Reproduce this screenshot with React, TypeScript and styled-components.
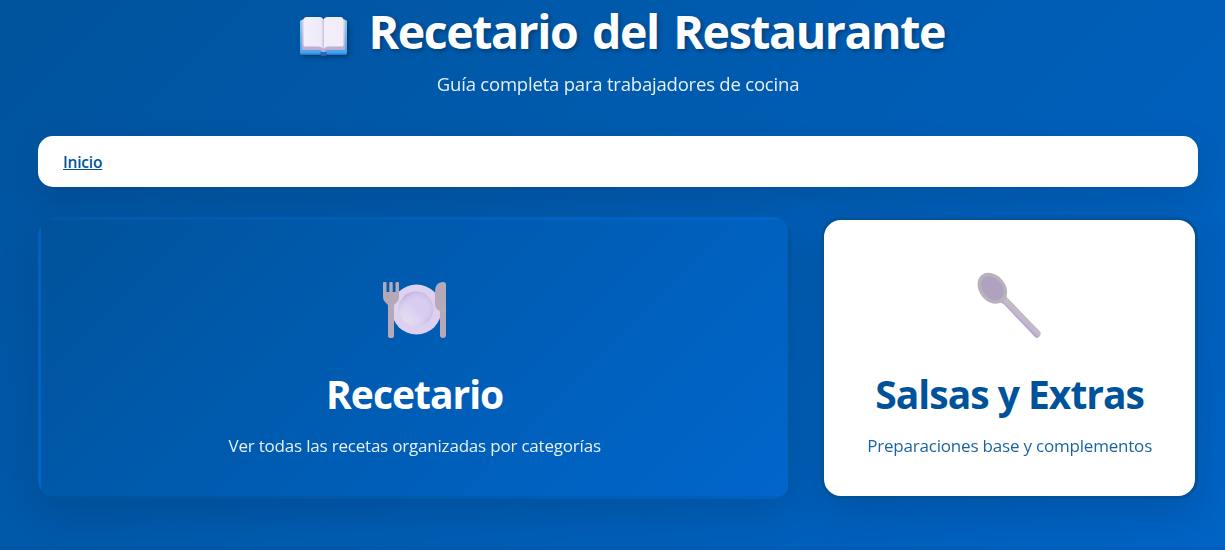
import React from "react";
import styled, { createGlobalStyle } from "styled-components";

const GlobalStyle = createGlobalStyle`
  * { box-sizing: border-box; margin: 0; padding: 0; }
  body {
    font-family: "Open Sans", "Noto Sans", sans-serif;
    background: #0059ad;
    overflow: hidden;
  }
`;

const Page = styled.div`
  height: 550px;
  padding: 0 27px 0 38px;
  background: linear-gradient(135deg, #00539b 0%, #0066cc 100%) 0 -80px / 100% 920px no-repeat;
  border-bottom: 3px solid rgba(0, 40, 90, 0.08);
`;

const Header = styled.header`
  height: 136px;
  display: flex;
  flex-direction: column;
  align-items: center;
  color: #fff;
`;

const Title = styled.h1`
  display: flex;
  height: 62px;
  align-items: center;
  gap: 19px;
  font-size: 46.5px;
  line-height: 62px;
  font-weight: 700;
  white-space: nowrap;
  padding-left: 7px;
`;

const TitleText = styled.span`
  width: 577px;
  letter-spacing: -1.45px;
  word-spacing: 4px;
  text-shadow: 2px 2px 4px rgba(0, 0, 0, 0.3);
`;

const BookIcon = styled.svg`
  width: 52px;
  height: 52px;
  margin-top: 12px;
  filter: drop-shadow(2px 2px 2px rgba(0, 0, 0, 0.3));
`;

const Subtitle = styled.p`
  margin-top: 9px;
  font-size: 18.5px;
  line-height: 26px;
  letter-spacing: -0.2px;
  white-space: nowrap;
  opacity: 0.9;
`;

const Nav = styled.nav`
  height: 51px;
  padding: 2px 25px 0;
  display: flex;
  align-items: center;
  border-radius: 15px;
  background: #fff;
  box-shadow: 0 10px 30px rgba(0, 0, 0, 0.12);
`;

const NavLink = styled.a`
  color: #00539b;
  font-size: 15.5px;
  font-weight: 600;
  line-height: 21px;
  letter-spacing: -0.2px;
  text-decoration: underline;
  text-decoration-thickness: 1px;
`;

const Cards = styled.main`
  display: grid;
  grid-template-columns: 2fr 1fr;
  gap: 30px;
  margin-top: 30px;
`;

const Card = styled.section<{ $primary?: boolean }>`
  height: 282px;
  min-width: 0;
  padding: 48px 0 0;
  display: flex;
  flex-direction: column;
  align-items: center;
  white-space: nowrap;
  border: 3px solid ${(p) => (p.$primary ? "transparent" : "#00539b")};
  border-radius: 20px;
  color: ${(p) => (p.$primary ? "#fff" : "#00539b")};
  background: ${(p) => (p.$primary ? "linear-gradient(135deg, #00539b 0%, #0066cc 100%)" : "#fff")};
  box-shadow: 0 15px 40px rgba(0, 0, 0, 0.13);
`;

const CardIcon = styled.svg`
  width: 72px;
  height: 80px;
`;

const CardTitle = styled.h2`
  margin-top: 19px;
  font-size: 39px;
  line-height: 54px;
  font-weight: 700;
  letter-spacing: -1px;
`;

const CardText = styled.p`
  margin-top: 12px;
  font-size: 17px;
  line-height: 26px;
  letter-spacing: -0.2px;
  opacity: 0.9;
`;

const Book = () => (
  <BookIcon viewBox="0 0 52 52" aria-hidden="true">
    <defs>
      <linearGradient id="cover" x1="0" y1="0" x2="0" y2="1">
        <stop offset="0" stopColor="#8fd0ee" />
        <stop offset="0.6" stopColor="#6fb4e6" />
        <stop offset="1" stopColor="#3fa2ee" />
      </linearGradient>
      <linearGradient id="sheet" x1="0" y1="0" x2="1" y2="0">
        <stop offset="0" stopColor="#f3eefb" />
        <stop offset="0.85" stopColor="#eeeaf8" />
        <stop offset="1" stopColor="#d9cfe6" />
      </linearGradient>
      <linearGradient id="pages" x1="0" y1="0" x2="0" y2="1">
        <stop offset="0" stopColor="#d6d0e2" />
        <stop offset="1" stopColor="#bda6cf" />
      </linearGradient>
    </defs>
    <rect x="2" y="10" width="47" height="34" rx="1.5" fill="#2f7bcb" />
    <rect x="2" y="9" width="47" height="33.5" rx="1.5" fill="url(#cover)" />
    <path d="M22.500 41h6v3q-3 2.500-6 0z" fill="#2067b4" />
    <path d="M4 8.500h43v29.500q0 1-1 1H29l-3.500 2.500-3.500-2.500H5q-1 0-1-1z" fill="url(#pages)" />
    <path d="M5.500 8q1-2 3-2H22q2.500 0 3.500 2.500V38q-2-2.500-4.500-2.500H7q-1.500 0-1.500-1.500z" fill="url(#sheet)" />
    <path d="M25.500 8.500Q26.500 6 29 6h13.500q2 0 3 2v26q0 1.500-1.500 1.500H30q-2.500 0-4.500 2.500z" fill="#f1edf9" />
    <path d="M25.500 9v29" stroke="#cfc3df" strokeWidth="1" />
  </BookIcon>
);

const Plate = () => (
  <CardIcon viewBox="0 0 72 80" aria-hidden="true">
    <defs>
      <linearGradient id="plate" x1="0" y1="0" x2="1" y2="1">
        <stop offset="0" stopColor="#dcd4ee" />
        <stop offset="1" stopColor="#dfcdf2" />
      </linearGradient>
      <radialGradient id="well" cx="0.54" cy="0.5" r="0.55">
        <stop offset="0.55" stopColor="#d8cdf1" />
        <stop offset="0.8" stopColor="#cec3e7" />
        <stop offset="1" stopColor="#b9aad7" />
      </radialGradient>
      <linearGradient id="shine" x1="1" y1="0" x2="0" y2="1">
        <stop offset="0.5" stopColor="#ece8f6" stopOpacity="0" />
        <stop offset="0.85" stopColor="#ece8f6" stopOpacity="0.8" />
      </linearGradient>
    </defs>
    <circle cx="37.500" cy="41.500" r="25" fill="url(#plate)" />
    <circle cx="37" cy="41" r="17.500" fill="url(#well)" />
    <circle cx="37" cy="41" r="17.500" fill="url(#shine)" />
    <path d="M4 15q0-1 1-1h1.500q1 0 1 1v9h2.800v-9q0-1 1-1h1.400q1 0 1 1v9h2.800v-9q0-1 1-1H19q1 0 1 1v14q0 3-2 5l-3 3v31q0 2-3 2t-3-2V37l-3-3q-2-2-2-5z" fill="#b5a8b9" />
    <path d="M67 17v50q0 3-3 3t-3-3V43q-5-2-5-7V24q0-10 8-10 3 0 3 3z" fill="#b6a9ba" />
    <path d="M66.500 39q0 3.500-3.500 3.500-6-.5-6-6" fill="none" stroke="#b5b4b2" strokeWidth="1.200" />
  </CardIcon>
);

const Spoon = () => (
  <CardIcon viewBox="0 0 72 80" aria-hidden="true">
    <defs>
      <linearGradient id="handle" gradientUnits="userSpaceOnUse" x1="48" y1="44" x2="41" y2="51">
        <stop offset="0" stopColor="#bfbac1" />
        <stop offset="0.5" stopColor="#c5b9d0" />
        <stop offset="1" stopColor="#aa90cc" />
      </linearGradient>
    </defs>
    <path d="M30 20Q30.500 28 35.500 32L66 63.500q1.500 2 0 4.500-2 3-4.500 1.500L31 37.500Q27 33.500 21 34.500z" fill="url(#handle)" />
    <ellipse cx="18.300" cy="20.300" rx="13" ry="17" transform="rotate(-40 18.300 20.300)" fill="#b8b3bb" />
    <ellipse cx="18.300" cy="20.300" rx="9.800" ry="13.300" transform="rotate(-40 18.300 20.300)" fill="#b0a2be" />
  </CardIcon>
);

export default function App() {
  return (
    <>
      <GlobalStyle />
      <Page>
        <Header>
          <Title>
            <Book />
            <TitleText>Recetario del Restaurante</TitleText>
          </Title>
          <Subtitle>Guía completa para trabajadores de cocina</Subtitle>
        </Header>
        <Nav>
          <NavLink href="#">Inicio</NavLink>
        </Nav>
        <Cards>
          <Card $primary>
            <Plate />
            <CardTitle>Recetario</CardTitle>
            <CardText>Ver todas las recetas organizadas por categorías</CardText>
          </Card>
          <Card>
            <Spoon />
            <CardTitle>Salsas y Extras</CardTitle>
            <CardText>Preparaciones base y complementos</CardText>
          </Card>
        </Cards>
      </Page>
    </>
  );
}
